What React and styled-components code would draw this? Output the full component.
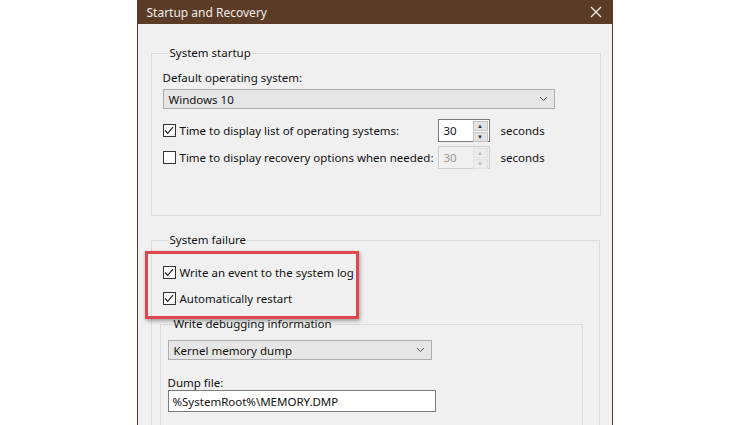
import React from "react";
import styled, { createGlobalStyle } from "styled-components";

const G = createGlobalStyle`
  html,body{margin:0;padding:0;background:#fff;}
  body{font-family:"Noto Sans","Open Sans",sans-serif;font-size:11.5px;color:#111;}
`;
const Page = styled.div`width:750px;height:425px;overflow:hidden;display:flex;justify-content:center;padding-left:0;`;
const Win = styled.div`
  margin-left:-1px;width:474px;height:440px;border:1px solid #5a3b25;border-top:none;background:#f0f0f0;
  display:flex;flex-direction:column;position:relative;
`;
const Title = styled.div`
  height:31px;background:#5a3b25;color:#f3ece6;display:flex;align-items:center;justify-content:space-between;
  padding:0 10px 0 9px;font-size:12px;
`;
const Body = styled.div`padding:22px 12px 0 13px;display:flex;flex-direction:column;gap:17px;`;
const Group = styled.fieldset`
  margin:0;border:1px solid #dcdcdc;border-radius:0;padding:${p=>p.$pad||"0 10px"};min-height:${p=>p.$h||0}px;
  display:flex;flex-direction:column;
  legend{padding:0 1px;margin-left:6px;font-size:11.5px;line-height:14px;}
`;
const Label = styled.div`line-height:14px;margin-top:${p=>p.$mt||0}px;`;
const Select = styled.div`
  width:${p=>p.$w}px;height:20px;border:1px solid #adadad;background:#e6e6e6;display:flex;align-items:center;
  justify-content:space-between;padding:0 6px 0 5px;box-sizing:border-box;margin-top:${p=>p.$mt||0}px;
`;
const Row = styled.div`display:flex;align-items:center;height:${p=>p.$h||24}px;`;
const Check = styled.span`
  width:11px;height:11px;border:1px solid #333;background:#fff;display:inline-flex;align-items:center;justify-content:center;margin-right:4px;flex:none;
`;
const Spin = styled.div`
  margin-left:auto;width:52px;height:23px;box-sizing:border-box;border:1px solid ${p=>p.$dis?"#cfcfcf":"#7a7a7a"};
  background:${p=>p.$dis?"#f0f0f0":"#fff"};display:flex;color:${p=>p.$dis?"#999":"#111"};
`;
const SpinVal = styled.div`flex:1;display:flex;align-items:center;padding-left:5px;`;
const Arrows = styled.div`width:15px;display:flex;flex-direction:column;gap:1px;padding:1px;`;
const Arr = styled.div`flex:1;background:${p=>p.$dis?"#ececec":"#e2e2e2"};border:1px solid ${p=>p.$dis?"#e0e0e0":"#c4c4c4"};display:flex;align-items:center;justify-content:center;font-size:6px;color:${p=>p.$dis?"#bbb":"#333"};`;
const Sec = styled.span`margin-left:11px;width:54px;`;
const Input = styled.div`width:268px;height:22px;box-sizing:border-box;border:1px solid #7a7a7a;background:#fff;display:flex;align-items:center;padding-left:4px;`;
const Highlight = styled.div`
  position:absolute;left:7px;top:251px;width:208px;height:62px;border:3px solid #e0474c;box-shadow:1px 2px 4px rgba(0,0,0,.35);
`;
const Chev = ()=>(<svg width="9" height="6" viewBox="0 0 9 6"><path d="M1 1l3.5 3.5L8 1" fill="none" stroke="#555" strokeWidth="1"/></svg>);
const Tick = ()=>(<svg width="10" height="9" viewBox="0 0 10 9"><path d="M1 4.5l2.7 2.8L9 1.2" fill="none" stroke="#222" strokeWidth="1.2"/></svg>);
const CB = ({on})=> <Check>{on && <Tick/>}</Check>;
const SpinBox = ({dis})=>(<Spin $dis={dis}><SpinVal>30</SpinVal><Arrows><Arr $dis={dis}>▲</Arr><Arr $dis={dis}>▼</Arr></Arrows></Spin>);

export default function App(){
  return (<Page><G/><Win>
    <Title><span>Startup and Recovery</span>
      <svg width="12" height="12" viewBox="0 0 12 12"><path d="M1 1l10 10M11 1L1 11" stroke="#f3ece6" strokeWidth="1.3"/></svg>
    </Title>
    <Body>
      <Group $h={168} $pad="0 45px 0 11px">
        <legend>System startup</legend>
        <Label $mt={11}>Default operating system:</Label>
        <Select $w={392} $mt={4}><span>Windows 10</span><Chev/></Select>
        <Row $h={24} style={{marginTop:9}}><CB on/><span>Time to display list of operating systems:</span><SpinBox/><Sec>seconds</Sec></Row>
        <Row $h={24} style={{marginTop:3}}><CB/><span>Time to display recovery options when needed:</span><SpinBox dis/><Sec>seconds</Sec></Row>
      </Group>
      <Group $h={200} $pad="0 16px 0 11px">
        <legend>System failure</legend>
        <Row $h={26} style={{marginTop:12}}><CB on/><span>Write an event to the system log</span></Row>
        <Row $h={26}><CB on/><span>Automatically restart</span></Row>
        <Group $h={120} $pad="0 10px 0 7px" style={{marginLeft:-3,marginTop:6}}>
          <legend style={{marginLeft:5}}>Write debugging information</legend>
          <Select $w={264} $mt={9}><span>Kernel memory dump</span><Chev/></Select>
          <Label $mt={16}>Dump file:</Label>
          <Input>%SystemRoot%\MEMORY.DMP</Input>
        </Group>
      </Group>
    </Body>
    <Highlight/>
  </Win></Page>);
}
